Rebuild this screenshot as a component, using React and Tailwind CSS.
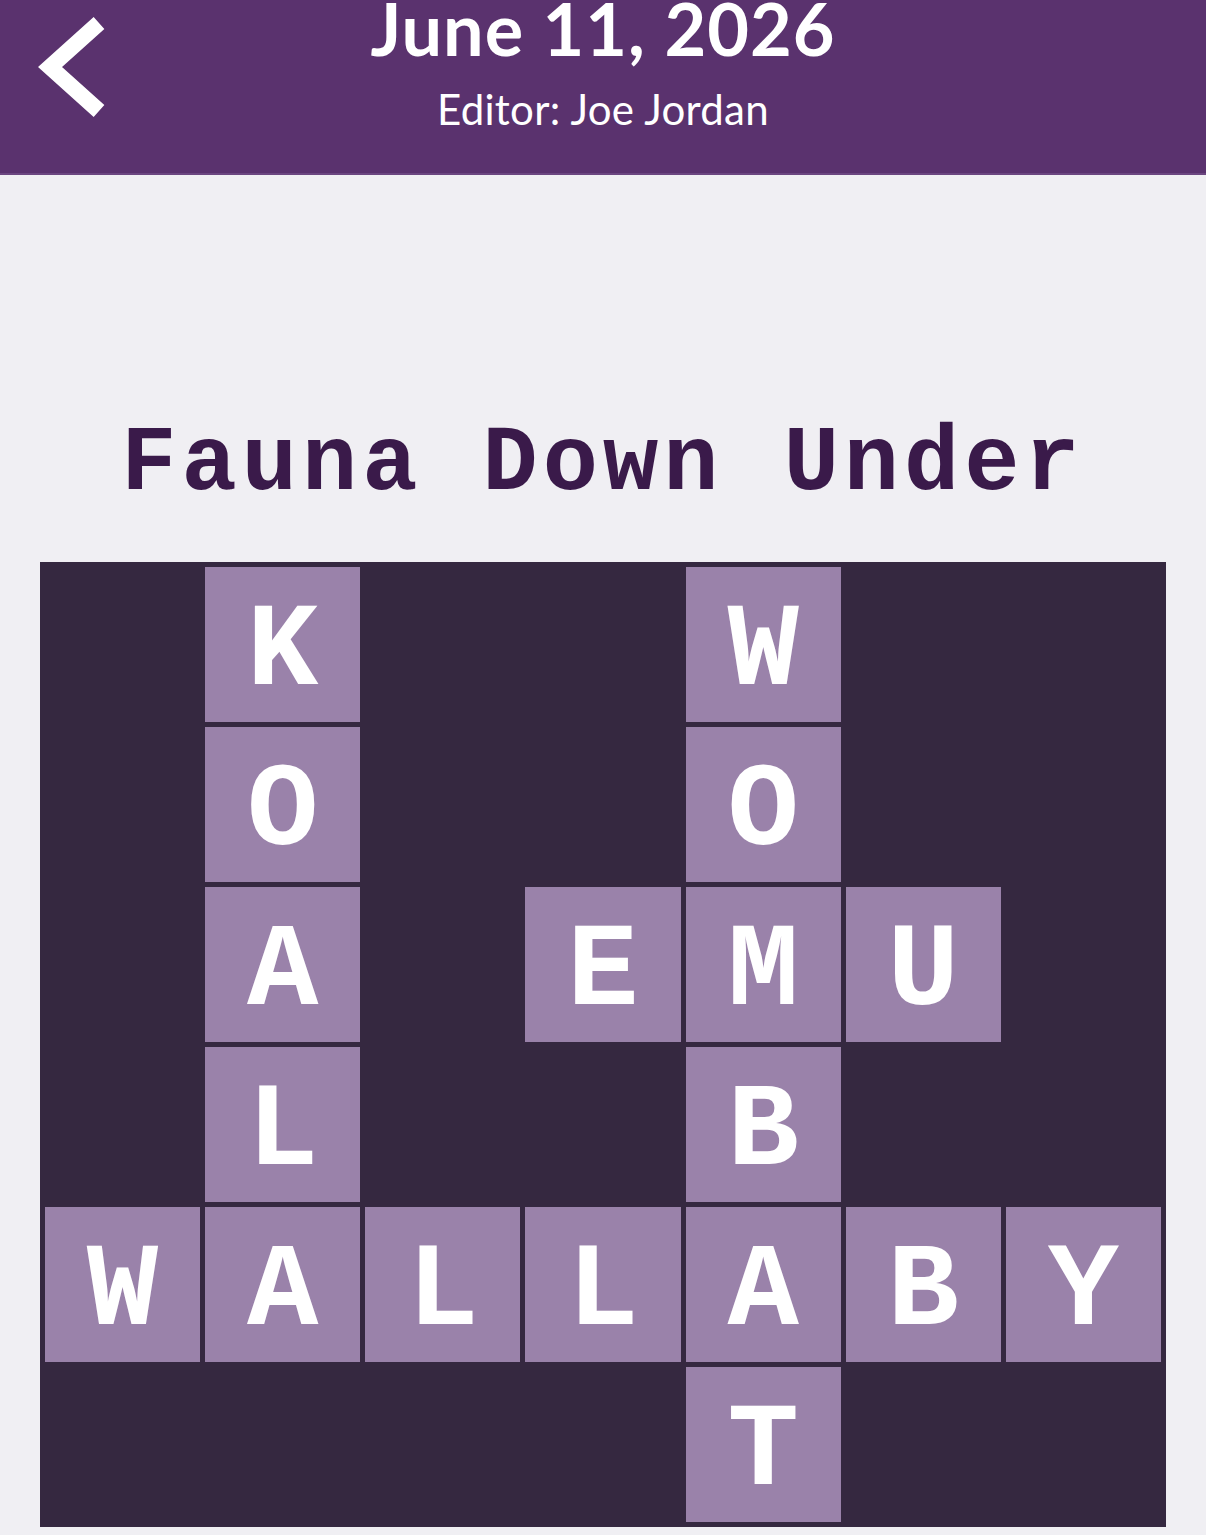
import React from "react";

const rows = [
  ["", "K", "", "", "W", "", ""],
  ["", "O", "", "", "O", "", ""],
  ["", "A", "", "E", "M", "U", ""],
  ["", "L", "", "", "B", "", ""],
  ["W", "A", "L", "L", "A", "B", "Y"],
  ["", "", "", "", "T", "", ""],
];

const mono =
  "font-['Courier_New','Nimbus_Mono_PS','FreeMono',Courier,'Liberation_Mono',monospace]";

function BackChevron() {
  return (
    <svg width="70" height="110" viewBox="0 0 70 110" className="block">
      <polyline
        points="63,7 14,51 63,95"
        fill="none"
        stroke="white"
        strokeWidth="16"
        strokeLinecap="butt"
        strokeLinejoin="miter"
      />
    </svg>
  );
}

export default function App() {
  return (
    <div className="w-[1206px] h-[1535px] overflow-hidden bg-[#f0eff3]">
      {/* header */}
      <div className="h-[175px] bg-[#5a326e] border-b-2 border-[#6b4680] flex items-start">
        <div className="w-[140px] pl-[36px] pt-[16px]">
          <BackChevron />
        </div>
        <div className="flex-1 flex flex-col items-center font-['Lato',sans-serif] text-white">
          <h1 className="text-[72px] font-bold leading-none mt-[-8px] tracking-[1px]">
            June 11, 2026
          </h1>
          <p className="text-[42px] leading-none mt-[24px] tracking-[0.3px]">
            Editor: Joe Jordan
          </p>
        </div>
        <div className="w-[140px]" />
      </div>

      {/* puzzle title */}
      <h2
        className={`mt-[244px] text-center ${mono} font-bold text-[92px] leading-none tracking-[5px] text-[#3a1a4a]`}
      >
        Fauna Down Under
      </h2>

      {/* grid */}
      <div className="ml-[40px] mt-[51px] w-[1126px] bg-[#352840] p-[5px] grid grid-cols-7 gap-[5px]">
        {rows.flat().map((ch, i) =>
          ch ? (
            <div
              key={i}
              className={`h-[155px] bg-[#9a82aa] flex items-center justify-center pt-[15px] ${mono} font-bold text-[119px] leading-none text-white`}
            >
              {ch}
            </div>
          ) : (
            <div key={i} className="h-[155px]" />
          )
        )}
      </div>
    </div>
  );
}
